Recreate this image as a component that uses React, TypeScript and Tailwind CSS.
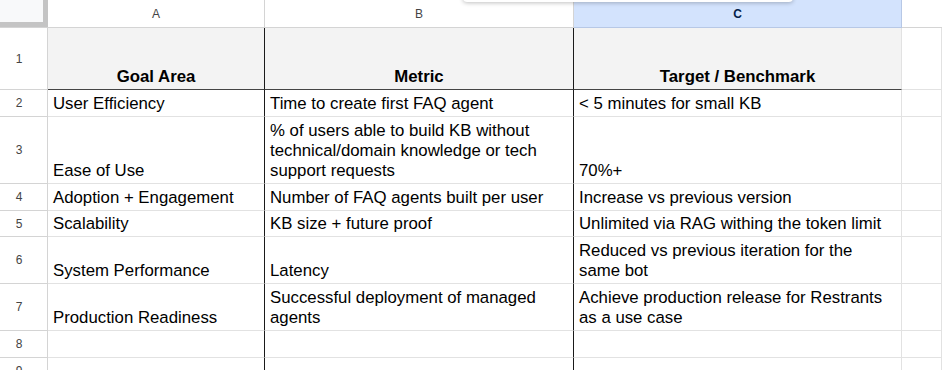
import React from 'react';

type Row = {
  n: number;
  h: string;
  cells: string[][];
};

const rows: Row[] = [
  { n: 1, h: 'h-[62px]', cells: [['Goal Area'], ['Metric'], ['Target / Benchmark']] },
  { n: 2, h: 'h-[27px]', cells: [['User Efficiency'], ['Time to create first FAQ agent'], ['< 5 minutes for small KB']] },
  {
    n: 3,
    h: 'h-[67px]',
    cells: [
      ['Ease of Use'],
      ['% of users able to build KB without', 'technical/domain knowledge or tech', 'support requests'],
      ['70%+'],
    ],
  },
  { n: 4, h: 'h-[27px]', cells: [['Adoption + Engagement'], ['Number of FAQ agents built per user'], ['Increase vs previous version']] },
  { n: 5, h: 'h-[26px]', cells: [['Scalability'], ['KB size + future proof'], ['Unlimited via RAG withing the token limit']] },
  {
    n: 6,
    h: 'h-[47px]',
    cells: [['System Performance'], ['Latency'], ['Reduced vs previous iteration for the', 'same bot']],
  },
  {
    n: 7,
    h: 'h-[47px]',
    cells: [
      ['Production Readiness'],
      ['Successful deployment of managed', 'agents'],
      ['Achieve production release for Restrants', 'as a use case'],
    ],
  },
  { n: 8, h: 'h-[27px]', cells: [[], [], []] },
  { n: 9, h: 'h-[27px]', cells: [[], [], []] },
];

const grid = 'grid grid-cols-[48px_217px_309px_328px_1fr]';

const App: React.FC = () => {
  return (
    <div className="relative w-[942px] h-[370px] overflow-hidden bg-white font-['Liberation_Sans',Arial,sans-serif] text-black">
      {/* column headers */}
      <div className={`${grid} h-[28px]`}>
        <div className="h-[28px] bg-[#c4c4c4] border-b border-[#d4d4d4]">
          <div className="w-[43px] h-[22px] bg-[#f8f9fa]" />
        </div>
        <div className="flex items-center justify-center border-r border-b border-[#d4d4d4] text-[12px] text-[#444]">A</div>
        <div className="flex items-center justify-center border-r border-b border-[#d4d4d4] text-[12px] text-[#444]">B</div>
        <div className="flex items-center justify-center border-r border-b border-[#b7c8e6] bg-[#d3e3fd] text-[12px] font-bold text-[#041e49]">C</div>
        <div className="border-b border-[#d4d4d4]" />
      </div>

      {/* body rows */}
      {rows.map((row) => {
        const head = row.n === 1;
        return (
          <div key={row.n} className={`${grid} ${row.h}`}>
            <div className="flex items-center pl-[13px] border-r border-b border-[#d4d4d4] text-[12px] text-[#444]">
              <span className="w-[12px] text-center">{row.n}</span>
            </div>
            {row.cells.map((lines, i) => (
              <div
                key={i}
                className={`flex items-end px-[5px] pb-[2px] border-r border-b text-[16.8px] leading-[20px] whitespace-nowrap ${
                  i < 2 ? 'border-r-[#1a1a1a]' : 'border-r-[#e2e2e2]'
                } ${head ? 'bg-[#f3f3f3] border-b-[#444] justify-center font-bold' : 'border-b-[#e2e2e2]'}`}
              >
                <div>
                  {lines.map((l, j) => (
                    <div key={j}>{l}</div>
                  ))}
                </div>
              </div>
            ))}
            <div className="border-r border-b border-[#e2e2e2]" />
          </div>
        );
      })}

      {/* floating menu edge at the top */}
      <div className="absolute left-[463px] top-[-12px] w-[330px] h-[14px] bg-white rounded-b shadow-[0_1px_4px_rgba(0,0,0,0.25)]" />
    </div>
  );
};

export default App;
